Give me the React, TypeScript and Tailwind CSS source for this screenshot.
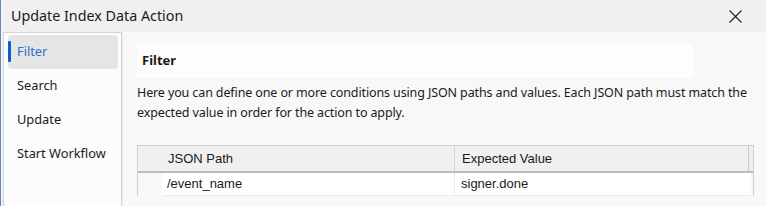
import React from 'react';

const navItems = ['Filter', 'Search', 'Update', 'Start Workflow'];

function CloseIcon() {
  return (
    <svg width="13" height="13" viewBox="0 0 13 13" className="text-[#1f1f1f]">
      <path d="M0.5 0.5 L12.5 12.5 M12.5 0.5 L0.5 12.5" stroke="currentColor" strokeWidth="1.1" />
    </svg>
  );
}

export default function App() {
  return (
    <div
      className="w-[766px] h-[206px] overflow-hidden flex flex-col bg-[#f0f0f0] border-l border-[#6a88b8] text-[#1a1a1a]"
      style={{ fontFamily: '"Noto Sans", "Liberation Sans", sans-serif' }}
    >
      {/* Title bar */}
      <div className="h-[32px] shrink-0 flex items-center justify-between pl-[10px] pr-[24px]">
        <span className="text-[14.3px]">Update Index Data Action</span>
        <CloseIcon />
      </div>

      <div className="flex flex-1 min-h-0 pl-[2px]">
        {/* Side nav */}
        <div className="w-[119px] shrink-0 bg-[#fcfcfc] border-t border-l border-r border-[#d4d4d4] pt-[2px] pl-[4px] pr-[3px]">
          {navItems.map((item, i) => (
            <div
              key={item}
              className={
                i === 0
                  ? 'relative h-[34px] flex items-center pl-[9px] rounded-[4px] bg-[#e5e5e5] text-[#2f6fc4] text-[12.8px]'
                  : 'h-[34px] flex items-center pl-[9px] text-[12.8px]'
              }
            >
              {i === 0 && <span className="absolute left-0 top-[6px] w-[3px] h-[21px] bg-[#0a5fd0] rounded-[1px]" />}
              {item}
            </div>
          ))}
        </div>

        {/* Content */}
        <div className="flex-1 bg-[#f8f8f8] border-l border-[#ececec] pl-[14px] pt-[12px]">
          <div className="w-[556px] h-[34px] bg-[#fdfdfd] flex items-center pl-[5px]">
            <span className="text-[13px] font-bold">Filter</span>
          </div>
          <p className="mt-[5px] w-[620px] text-[12.5px] tracking-[-0.12px] leading-[20px]">
            Here you can define one or more conditions using JSON paths and values. Each JSON path must match the
            expected value in order for the action to apply.
          </p>

          {/* Table */}
          <div
            className="mt-[22px] w-[617px] border-t border-l border-r border-[#cfcfcf] text-[13px]"
            style={{ fontFamily: '"Liberation Sans", Arial, sans-serif' }}
          >
            <div className="h-[27px] flex bg-[#f0f0f0] border-b-2 border-[#bcbcbc]">
              <div className="w-[317px] flex items-center pl-[30px] border-r border-[#d6d6d6]">JSON Path</div>
              <div className="flex-1 flex items-center pl-[7px] border-r border-[#c8c8c8] mr-[4px]">Expected Value</div>
            </div>
            <div className="flex h-[23px]">
              <div className="w-[24px] shrink-0" />
              <div className="w-[293px] bg-white flex items-center pl-[5px] border-b border-r border-[#ececec]">/event_name</div>
              <div className="flex-1 bg-white flex items-center pl-[6px] border-b border-[#ececec] mr-[2px]">signer.done</div>
            </div>
          </div>
        </div>
      </div>
    </div>
  );
}
